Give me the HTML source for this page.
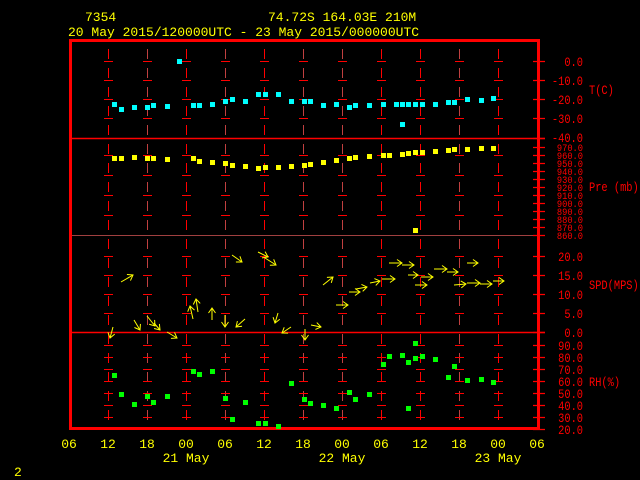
<!DOCTYPE html>
<html><head><style>
html,body{margin:0;padding:0;background:#000;width:640px;height:480px;overflow:hidden}
svg{display:block}
text{font-family:"Liberation Mono",monospace;font-size:13px}
.y{fill:#ffff00}.r{fill:#ff0000}
.r text{font-size:12.5px}
.r .p{font-size:10.5px}
</style></head><body>
<svg width="640" height="480" viewBox="0 0 640 480">
<defs>
<marker id="ah" markerWidth="8" markerHeight="8" refX="6" refY="4" orient="auto" markerUnits="userSpaceOnUse">
<path d="M1,0.5 L6,4 L1,7.5" fill="none" stroke="#ffff00" stroke-width="1"/>
</marker>
</defs>
<text x="85" y="21" class="y">7354</text>
<text x="268" y="21" class="y">74.72S  164.03E   210M</text>
<text x="68" y="36" class="y">20 May 2015/120000UTC - 23 May 2015/000000UTC</text>

<g stroke="#ff0000" stroke-width="1" fill="none">
<g stroke-dasharray="10,9" stroke-dashoffset="-1">
<line x1="108.5" y1="48" x2="108.5" y2="427"/><line x1="147.5" y1="48" x2="147.5" y2="427" stroke="#c04040"/>
<line x1="186.5" y1="48" x2="186.5" y2="427"/><line x1="225.5" y1="48" x2="225.5" y2="427" stroke="#c04040"/>
<line x1="264.5" y1="48" x2="264.5" y2="427"/><line x1="303.5" y1="48" x2="303.5" y2="427" stroke="#c04040"/>
<line x1="342.5" y1="48" x2="342.5" y2="427" stroke="#c04040"/><line x1="381.5" y1="48" x2="381.5" y2="427"/>
<line x1="420.5" y1="48" x2="420.5" y2="427"/><line x1="459.5" y1="48" x2="459.5" y2="427" stroke="#c04040"/>
<line x1="498.5" y1="48" x2="498.5" y2="427"/>
</g>
</g>

<line x1="70" y1="138.5" x2="545" y2="138.5" stroke="#ff0000" stroke-width="1.5"/>
<line x1="70" y1="235.5" x2="545" y2="235.5" stroke="#a04040" stroke-width="1"/>
<line x1="70" y1="332.5" x2="545" y2="332.5" stroke="#ff0000" stroke-width="1.5"/>
<rect x="70.5" y="40.5" width="468" height="388" fill="none" stroke="#ff0000" stroke-width="3"/>

<g stroke="#ff0000" stroke-width="1.2">
<path d="M533 61.5h12M533 80.5h12M533 99.5h12M533 118.5h12M533 138.5h12
M533 147.5h12M533 155.5h12M533 163.5h12M533 171.5h12M533 179.5h12M533 187.5h12M533 195.5h12M533 203.5h12M533 211.5h12M533 219.5h12M533 227.5h12M533 235.5h12
M533 256.5h12M533 275.5h12M533 294.5h12M533 313.5h12M533 332.5h12
M533 345.5h12M533 357.5h12M533 369.5h12M533 381.5h12M533 393.5h12M533 405.5h12M533 417.5h12M533 429.5h12"/>
</g>
<g stroke="#ff0000" stroke-width="1" id="crosses">
<path d="M104 61.5h9M104 80.5h9M104 99.5h9M104 118.5h9M104 155.5h9M104 175.5h9M104 195.5h9M104 215.5h9M104 256.5h9M104 275.5h9M104 294.5h9M104 313.5h9M104 345.5h9M104 357.5h9M104 369.5h9M104 381.5h9M104 393.5h9M104 405.5h9M104 417.5h9"/>
</g>

<g class="r" text-anchor="end" transform="translate(583,0) scale(0.83,1)">
<text x="0" y="66">0.0</text><text x="0" y="85">-10.0</text><text x="0" y="104">-20.0</text><text x="0" y="123">-30.0</text><text x="0" y="142">-40.0</text>
<g><text class="p" x="0" y="151">970.0</text><text class="p" x="0" y="159">960.0</text><text class="p" x="0" y="167">950.0</text><text class="p" x="0" y="175">940.0</text><text class="p" x="0" y="183">930.0</text><text class="p" x="0" y="191">920.0</text><text class="p" x="0" y="199">910.0</text><text class="p" x="0" y="207">900.0</text><text class="p" x="0" y="215">890.0</text><text class="p" x="0" y="223">880.0</text><text class="p" x="0" y="231">870.0</text><text class="p" x="0" y="239">860.0</text></g>
<text x="0" y="261">20.0</text><text x="0" y="280">15.0</text><text x="0" y="299">10.0</text><text x="0" y="318">5.0</text><text x="0" y="337">0.0</text>
<text x="0" y="350">90.0</text><text x="0" y="362">80.0</text><text x="0" y="374">70.0</text><text x="0" y="386">60.0</text><text x="0" y="398">50.0</text><text x="0" y="410">40.0</text><text x="0" y="422">30.0</text><text x="0" y="434">20.0</text>
</g>
<g class="r" transform="translate(589,0) scale(0.83,1)"><text x="0" y="94">T(C)</text><text x="0" y="191">Pre (mb)</text><text x="0" y="289">SPD(MPS)</text><text x="0" y="386">RH(%)</text></g>

<g class="y" text-anchor="middle">
<text x="69" y="448">06</text><text x="108" y="448">12</text><text x="147" y="448">18</text><text x="186" y="448">00</text><text x="225" y="448">06</text><text x="264" y="448">12</text><text x="303" y="448">18</text><text x="342" y="448">00</text><text x="381" y="448">06</text><text x="420" y="448">12</text><text x="459" y="448">18</text><text x="498" y="448">00</text><text x="537" y="448">06</text>
<text x="186" y="462">21 May</text><text x="342" y="462">22 May</text><text x="498" y="462">23 May</text>
</g>
<text x="14" y="476" class="y">2</text>

<g fill="#00ffff">
<rect x="112" y="102" width="5" height="5"/><rect x="119" y="107" width="5" height="5"/><rect x="132" y="105" width="5" height="5"/><rect x="145" y="105" width="5" height="5"/><rect x="151" y="103" width="5" height="5"/><rect x="165" y="104" width="5" height="5"/><rect x="177" y="59" width="5" height="5"/><rect x="191" y="103" width="5" height="5"/><rect x="197" y="103" width="5" height="5"/><rect x="210" y="102" width="5" height="5"/><rect x="223" y="99" width="5" height="5"/><rect x="230" y="97" width="5" height="5"/><rect x="243" y="99" width="5" height="5"/><rect x="256" y="92" width="5" height="5"/><rect x="263" y="92" width="5" height="5"/><rect x="276" y="92" width="5" height="5"/><rect x="289" y="99" width="5" height="5"/><rect x="302" y="99" width="5" height="5"/><rect x="308" y="99" width="5" height="5"/><rect x="321" y="103" width="5" height="5"/><rect x="334" y="102" width="5" height="5"/><rect x="347" y="105" width="5" height="5"/><rect x="353" y="103" width="5" height="5"/><rect x="367" y="103" width="5" height="5"/><rect x="381" y="102" width="5" height="5"/><rect x="394" y="102" width="5" height="5"/><rect x="400" y="102" width="5" height="5"/><rect x="406" y="102" width="5" height="5"/><rect x="413" y="102" width="5" height="5"/><rect x="420" y="102" width="5" height="5"/><rect x="433" y="102" width="5" height="5"/><rect x="446" y="100" width="5" height="5"/><rect x="452" y="100" width="5" height="5"/><rect x="465" y="97" width="5" height="5"/><rect x="479" y="98" width="5" height="5"/><rect x="491" y="96" width="5" height="5"/><rect x="400" y="122" width="5" height="5"/>
</g>
<g fill="#ffff00">
<rect x="112" y="156" width="5" height="5"/><rect x="119" y="156" width="5" height="5"/><rect x="132" y="155" width="5" height="5"/><rect x="145" y="156" width="5" height="5"/><rect x="151" y="156" width="5" height="5"/><rect x="165" y="157" width="5" height="5"/><rect x="191" y="156" width="5" height="5"/><rect x="197" y="159" width="5" height="5"/><rect x="210" y="160" width="5" height="5"/><rect x="223" y="161" width="5" height="5"/><rect x="230" y="163" width="5" height="5"/><rect x="243" y="164" width="5" height="5"/><rect x="256" y="166" width="5" height="5"/><rect x="263" y="165" width="5" height="5"/><rect x="276" y="165" width="5" height="5"/><rect x="289" y="164" width="5" height="5"/><rect x="302" y="163" width="5" height="5"/><rect x="308" y="162" width="5" height="5"/><rect x="321" y="160" width="5" height="5"/><rect x="334" y="158" width="5" height="5"/><rect x="347" y="156" width="5" height="5"/><rect x="353" y="155" width="5" height="5"/><rect x="367" y="154" width="5" height="5"/><rect x="381" y="153" width="5" height="5"/><rect x="387" y="153" width="5" height="5"/><rect x="400" y="152" width="5" height="5"/><rect x="406" y="151" width="5" height="5"/><rect x="413" y="150" width="5" height="5"/><rect x="420" y="150" width="5" height="5"/><rect x="433" y="149" width="5" height="5"/><rect x="446" y="148" width="5" height="5"/><rect x="452" y="147" width="5" height="5"/><rect x="465" y="147" width="5" height="5"/><rect x="479" y="146" width="5" height="5"/><rect x="491" y="146" width="5" height="5"/><rect x="413" y="228" width="5" height="5"/>
</g>
<g fill="#00ff00">
<rect x="112" y="373" width="5" height="5"/><rect x="119" y="392" width="5" height="5"/><rect x="132" y="402" width="5" height="5"/><rect x="145" y="394" width="5" height="5"/><rect x="151" y="400" width="5" height="5"/><rect x="165" y="394" width="5" height="5"/><rect x="191" y="369" width="5" height="5"/><rect x="197" y="372" width="5" height="5"/><rect x="210" y="369" width="5" height="5"/><rect x="223" y="396" width="5" height="5"/><rect x="230" y="417" width="5" height="5"/><rect x="243" y="400" width="5" height="5"/><rect x="256" y="421" width="5" height="5"/><rect x="263" y="421" width="5" height="5"/><rect x="276" y="424" width="5" height="5"/><rect x="289" y="381" width="5" height="5"/><rect x="302" y="397" width="5" height="5"/><rect x="308" y="401" width="5" height="5"/><rect x="321" y="403" width="5" height="5"/><rect x="334" y="406" width="5" height="5"/><rect x="347" y="390" width="5" height="5"/><rect x="353" y="397" width="5" height="5"/><rect x="367" y="392" width="5" height="5"/><rect x="381" y="362" width="5" height="5"/><rect x="387" y="354" width="5" height="5"/><rect x="400" y="353" width="5" height="5"/><rect x="406" y="360" width="5" height="5"/><rect x="413" y="356" width="5" height="5"/><rect x="413" y="341" width="5" height="5"/><rect x="420" y="354" width="5" height="5"/><rect x="433" y="357" width="5" height="5"/><rect x="446" y="375" width="5" height="5"/><rect x="452" y="364" width="5" height="5"/><rect x="465" y="378" width="5" height="5"/><rect x="479" y="377" width="5" height="5"/><rect x="491" y="380" width="5" height="5"/><rect x="406" y="406" width="5" height="5"/>
</g>

<g stroke="#ffff00" stroke-width="1" marker-end="url(#ah)" fill="none">
<path d="M121 282L133 275"/><path d="M232 255L242 262"/><path d="M258 252L268 257"/><path d="M265 258L276 265"/>
<path d="M323 285L333 277"/><path d="M349 292L360 292"/><path d="M336 305L348 305"/>
<path d="M198 312L196 299"/><path d="M193 319L190 306"/><path d="M212 320L212 308"/><path d="M225 315L225 327"/>
<path d="M245 319L236 327"/><path d="M278 313L275 323"/><path d="M291 327L282 333"/><path d="M305 329L305 340"/>
<path d="M311 325L321 327"/><path d="M113 327L110 338"/><path d="M134 320L140 330"/><path d="M147 316L155 326"/><path d="M154 323L160 330"/><path d="M167 332L177 338"/>
<path d="M389 263L402 263"/><path d="M402 265L414 265"/><path d="M382 279L395 279"/><path d="M408 275L418 275"/><path d="M421 277L433 277"/><path d="M415 285L427 285"/><path d="M434 269L447 269"/><path d="M447 272L458 272"/><path d="M467 263L478 263"/><path d="M454 285L466 284"/><path d="M467 283L480 283"/><path d="M480 284L492 284"/><path d="M493 281L504 281"/><path d="M370 283L380 281"/><path d="M356 289L367 287"/>
</g>
</svg>
<script>
(function(){var g=document.getElementById('crosses');var p=g.querySelector('path');var xs=[147,186,225,264,303,342,381,420,459,498];xs.forEach(function(x){var c=p.cloneNode();c.setAttribute('transform','translate('+(x-108)+',0)');g.appendChild(c);});})();
</script>
</body></html>
